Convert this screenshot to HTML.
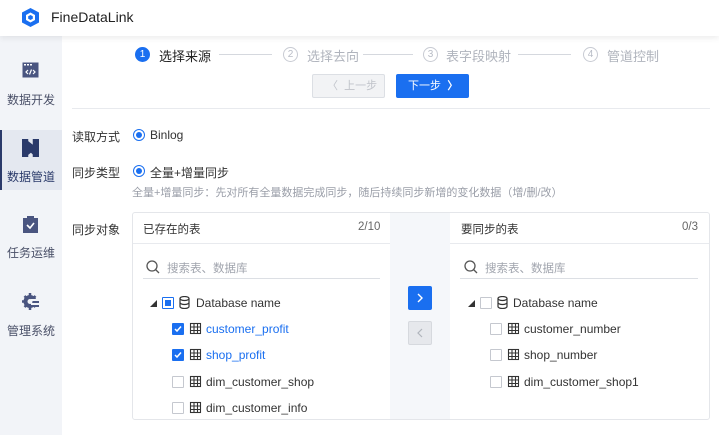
<!DOCTYPE html><html><head><meta charset="utf-8"><style>
*{margin:0;padding:0;box-sizing:border-box}
body{width:719px;height:435px;overflow:hidden;background:#fff;font-family:"Liberation Sans","Noto Sans CJK SC",sans-serif;color:#333;position:relative;font-size:12px}
.a{position:absolute;white-space:nowrap}
.hdr{left:0;top:0;width:719px;height:36px;background:#fff;box-shadow:0 2px 6px rgba(0,0,0,.08);z-index:2}
.side{left:0;top:36px;width:62px;height:399px;background:#f2f4f8}
.nav{font-size:12px;color:#4a5068;width:62px;text-align:center}
.circ{width:15px;height:15px;border-radius:50%;border:1px solid #c8cbd3;color:#b8bcc6;font-size:10px;text-align:center;line-height:13px}
.stl{font-size:13px;color:#b0b4bd}
.line{height:1px;background:#d5d8de}
.lbl{font-size:12px;color:#333}
.radio{width:12px;height:12px;border-radius:50%;border:1px solid #1a6ff0;background:#fff}
.radio:after{content:"";position:absolute;left:2px;top:2px;width:6px;height:6px;border-radius:50%;background:#1a6ff0}
.cb{width:12px;height:12px;border:1px solid #c5c8cf;background:#fff;border-radius:1px}
.cbk{background:#1a6ff0;border-color:#1a6ff0}
.tx{font-size:12px;color:#333}
.blue{color:#1a6ff0}
</style></head><body>
<div class="a hdr">
<svg class="a" style="left:20px;top:7px" width="21" height="21" viewBox="0 0 21 21"><path d="M10.5 1 L19 5.5 L19 15.5 L10.5 20 L2 15.5 L2 5.5Z" fill="#1a6ff0"/><path d="M10.5 5.5 L15 8 L15 13 L10.5 15.5 L6 13 L6 8Z" fill="#fff"/><path d="M10.5 8 L12.8 9.3 L12.8 11.8 L10.5 13 L8.2 11.8 L8.2 9.3Z" fill="#1a6ff0"/></svg>
<div class="a" style="left:51px;top:9px;font-size:14px;color:#222">FineDataLink</div>
</div>
<div class="a side"></div>
<div class="a" style="left:0;top:130px;width:62px;height:60px;background:#e4e8f0"></div>
<div class="a" style="left:0;top:130px;width:2px;height:60px;background:#2a3a6a"></div>
<svg class="a" style="left:22px;top:62px" width="17" height="16"><rect x="0.5" y="0.5" width="16" height="15" fill="#4a5580"/><rect x="2" y="2" width="2" height="1.5" fill="#fff"/><rect x="5" y="2" width="2" height="1.5" fill="#fff"/><rect x="8" y="2" width="2" height="1.5" fill="#fff"/><path d="M6 8 L4 10 L6 12 M11 8 L13 10 L11 12 M9.5 7.5 L7.5 12.5" stroke="#fff" fill="none" stroke-width="1.2"/></svg>
<div class="a nav" style="top:91px">数据开发</div>
<svg class="a" style="left:22px;top:139px" width="17" height="18"><path d="M0 0h5v18H0z M12 0h5v18h-5z M4 2 L13 9 L4 16 M4 7 L13 16" fill="#2a3a6a" stroke="#2a3a6a" stroke-width="2.5"/></svg>
<div class="a nav" style="top:168px;color:#2a3a6a">数据管道</div>
<svg class="a" style="left:23px;top:216px" width="15" height="17"><rect x="0" y="2" width="15" height="15" fill="#4a5580"/><rect x="4" y="0" width="7" height="4" fill="#4a5580"/><path d="M4 9 L7 12 L11 7" stroke="#fff" fill="none" stroke-width="1.6"/></svg>
<div class="a nav" style="top:244px">任务运维</div>
<svg class="a" style="left:22px;top:293px" width="17" height="17"><circle cx="8" cy="8.5" r="6.5" fill="#4a5580"/><path d="M8 0v17M0 8.5h16M2.5 3l11 11M13.5 3l-11 11" stroke="#4a5580" stroke-width="2.5"/><circle cx="8" cy="8.5" r="2.5" fill="#f2f4f8"/><rect x="9" y="6" width="8" height="2" fill="#f2f4f8"/><rect x="9" y="10" width="8" height="2" fill="#f2f4f8"/><rect x="11" y="8" width="6" height="2" fill="#4a5580"/><rect x="11" y="12" width="6" height="2" fill="#4a5580"/></svg>
<div class="a nav" style="top:322px">管理系统</div>

<div class="a circ" style="left:135px;top:47px;background:#1a6ff0;border-color:#1a6ff0;color:#fff">1</div>
<div class="a" style="left:159px;top:46px;font-size:13px;color:#222">选择来源</div>
<div class="a line" style="left:219px;top:54px;width:53px"></div>
<div class="a circ" style="left:283px;top:47px">2</div>
<div class="a stl" style="left:307px;top:46px">选择去向</div>
<div class="a line" style="left:363px;top:54px;width:50px"></div>
<div class="a circ" style="left:423px;top:47px">3</div>
<div class="a stl" style="left:446px;top:46px">表字段映射</div>
<div class="a line" style="left:518px;top:54px;width:53px"></div>
<div class="a circ" style="left:583px;top:47px">4</div>
<div class="a stl" style="left:607px;top:46px">管道控制</div>

<div class="a" style="left:312px;top:74px;width:73px;height:24px;background:#f2f3f5;border:1px solid #dcdfe4;border-radius:2px;color:#c0c3ca;font-size:11px;line-height:22px;padding-left:14px">〈&nbsp; 上一步</div>
<div class="a" style="left:396px;top:74px;width:73px;height:24px;background:#1a6ff0;border-radius:2px;color:#fff;font-size:11px;line-height:24px;padding-left:12px">下一步 &nbsp;<b>〉</b></div>
<div class="a" style="left:72px;top:108px;width:638px;height:1px;background:#e8eaee"></div>

<div class="a lbl" style="left:72px;top:128px">读取方式</div>
<div class="a radio" style="left:133px;top:129px"></div>
<div class="a tx" style="left:150px;top:128px">Binlog</div>
<div class="a lbl" style="left:72px;top:164px">同步类型</div>
<div class="a radio" style="left:133px;top:165px"></div>
<div class="a tx" style="left:150px;top:164px">全量+增量同步</div>
<div class="a" style="left:132px;top:184px;font-size:11px;color:#9a9ea8">全量+增量同步：先对所有全量数据完成同步，随后持续同步新增的变化数据（增/删/改）</div>
<div class="a lbl" style="left:72px;top:221px">同步对象</div>

<div class="a" style="left:132px;top:212px;width:578px;height:208px;border:1px solid #e4e6ea;border-radius:3px"></div>
<div class="a" style="left:390px;top:212px;width:60px;height:208px;background:#f5f7fa;border-top:1px solid #e4e6ea;border-bottom:1px solid #e4e6ea"></div>
<div class="a" style="left:133px;top:243px;width:257px;height:1px;background:#e8eaee"></div>
<div class="a" style="left:450px;top:243px;width:259px;height:1px;background:#e8eaee"></div>
<div class="a tx" style="left:143px;top:221px;font-size:11.5px">已存在的表</div>
<div class="a" style="left:358px;top:221px;font-size:11.5px;color:#666">2/10</div>
<div class="a tx" style="left:461px;top:221px;font-size:11.5px">要同步的表</div>
<div class="a" style="left:682px;top:221px;font-size:11.5px;color:#666">0/3</div>

<svg class="a" style="left:146px;top:260px" width="14" height="14"><circle cx="6" cy="6" r="5" stroke="#555" stroke-width="1.3" fill="none"/><path d="M9.5 9.5L13 13" stroke="#555" stroke-width="1.3"/></svg>
<div class="a" style="left:167px;top:260px;font-size:11.5px;color:#a0a4ad">搜索表、数据库</div>
<div class="a" style="left:143px;top:278px;width:237px;height:1px;background:#dcdfe4"></div>
<svg class="a" style="left:464px;top:260px" width="14" height="14"><circle cx="6" cy="6" r="5" stroke="#555" stroke-width="1.3" fill="none"/><path d="M9.5 9.5L13 13" stroke="#555" stroke-width="1.3"/></svg>
<div class="a" style="left:485px;top:260px;font-size:11.5px;color:#a0a4ad">搜索表、数据库</div>
<div class="a" style="left:460px;top:278px;width:238px;height:1px;background:#dcdfe4"></div>

<!-- left tree -->
<div class="a" style="left:150px;top:299px;font-size:7px;color:#333">◢</div>
<div class="a cb" style="left:162px;top:297px;border-color:#1a6ff0"><div style="margin:2px;width:6px;height:6px;background:#1a6ff0"></div></div>
<svg class="a" style="left:179px;top:296px" width="11" height="13"><ellipse cx="5.5" cy="2.5" rx="4.5" ry="2" fill="none" stroke="#333" stroke-width="1.2"/><path d="M1 2.5v8c0 1.1 2 2 4.5 2s4.5-.9 4.5-2v-8M1 6.5c0 1.1 2 2 4.5 2s4.5-.9 4.5-2" fill="none" stroke="#333" stroke-width="1.2"/></svg>
<div class="a tx" style="left:196px;top:296px">Database name</div>

<div class="a cb cbk" style="left:172px;top:323px"><svg width="10" height="10" style="position:absolute;left:0;top:0"><path d="M2 5l2 2 4-4.5" stroke="#fff" stroke-width="1.5" fill="none"/></svg></div>
<div class="a cb cbk" style="left:172px;top:349px"><svg width="10" height="10" style="position:absolute;left:0;top:0"><path d="M2 5l2 2 4-4.5" stroke="#fff" stroke-width="1.5" fill="none"/></svg></div>
<div class="a cb" style="left:172px;top:376px"></div>
<div class="a cb" style="left:172px;top:402px"></div>

<div class="a cb" style="left:480px;top:297px"></div>
<div class="a" style="left:468px;top:299px;font-size:7px;color:#333">◢</div>
<svg class="a" style="left:497px;top:296px" width="11" height="13"><ellipse cx="5.5" cy="2.5" rx="4.5" ry="2" fill="none" stroke="#333" stroke-width="1.2"/><path d="M1 2.5v8c0 1.1 2 2 4.5 2s4.5-.9 4.5-2v-8M1 6.5c0 1.1 2 2 4.5 2s4.5-.9 4.5-2" fill="none" stroke="#333" stroke-width="1.2"/></svg>
<div class="a tx" style="left:513px;top:296px">Database name</div>
<div class="a cb" style="left:490px;top:323px"></div>
<div class="a cb" style="left:490px;top:349px"></div>
<div class="a cb" style="left:490px;top:376px"></div>

<svg class="a" style="left:0;top:0" width="719" height="435">
<g fill="none" stroke="#333" stroke-width="1.1">
<rect x="190.5" y="323.5" width="10" height="10"/><path d="M190.5 327h10M190.5 330.5h10M194 323.5v10M197.5 323.5v10"/>
<rect x="190.5" y="349.5" width="10" height="10"/><path d="M190.5 353h10M190.5 356.5h10M194 349.5v10M197.5 349.5v10"/>
<rect x="190.5" y="376.5" width="10" height="10"/><path d="M190.5 380h10M190.5 383.5h10M194 376.5v10M197.5 376.5v10"/>
<rect x="190.5" y="402.5" width="10" height="10"/><path d="M190.5 406h10M190.5 409.5h10M194 402.5v10M197.5 402.5v10"/>
<rect x="508.5" y="323.5" width="10" height="10"/><path d="M508.5 327h10M508.5 330.5h10M512 323.5v10M515.5 323.5v10"/>
<rect x="508.5" y="349.5" width="10" height="10"/><path d="M508.5 353h10M508.5 356.5h10M512 349.5v10M515.5 349.5v10"/>
<rect x="508.5" y="376.5" width="10" height="10"/><path d="M508.5 380h10M508.5 383.5h10M512 376.5v10M515.5 376.5v10"/>
</g></svg>
<div class="a blue" style="left:206px;top:322px">customer_profit</div>
<div class="a blue" style="left:206px;top:348px">shop_profit</div>
<div class="a tx" style="left:206px;top:375px">dim_customer_shop</div>
<div class="a tx" style="left:206px;top:401px">dim_customer_info</div>
<div class="a tx" style="left:524px;top:322px">customer_number</div>
<div class="a tx" style="left:524px;top:348px">shop_number</div>
<div class="a tx" style="left:524px;top:375px">dim_customer_shop1</div>

<div class="a" style="left:408px;top:286px;width:24px;height:24px;background:#1a6ff0;border-radius:2px"><svg width="24" height="24"><path d="M10 8l4 4-4 4" stroke="#fff" stroke-width="1.4" fill="none"/></svg></div>
<div class="a" style="left:408px;top:321px;width:24px;height:24px;background:#e6e8ec;border:1px solid #d6d9de;border-radius:2px"><svg width="22" height="22"><path d="M13 7l-4 4 4 4" stroke="#b0b4bc" stroke-width="1.2" fill="none"/></svg></div>
</body></html>
